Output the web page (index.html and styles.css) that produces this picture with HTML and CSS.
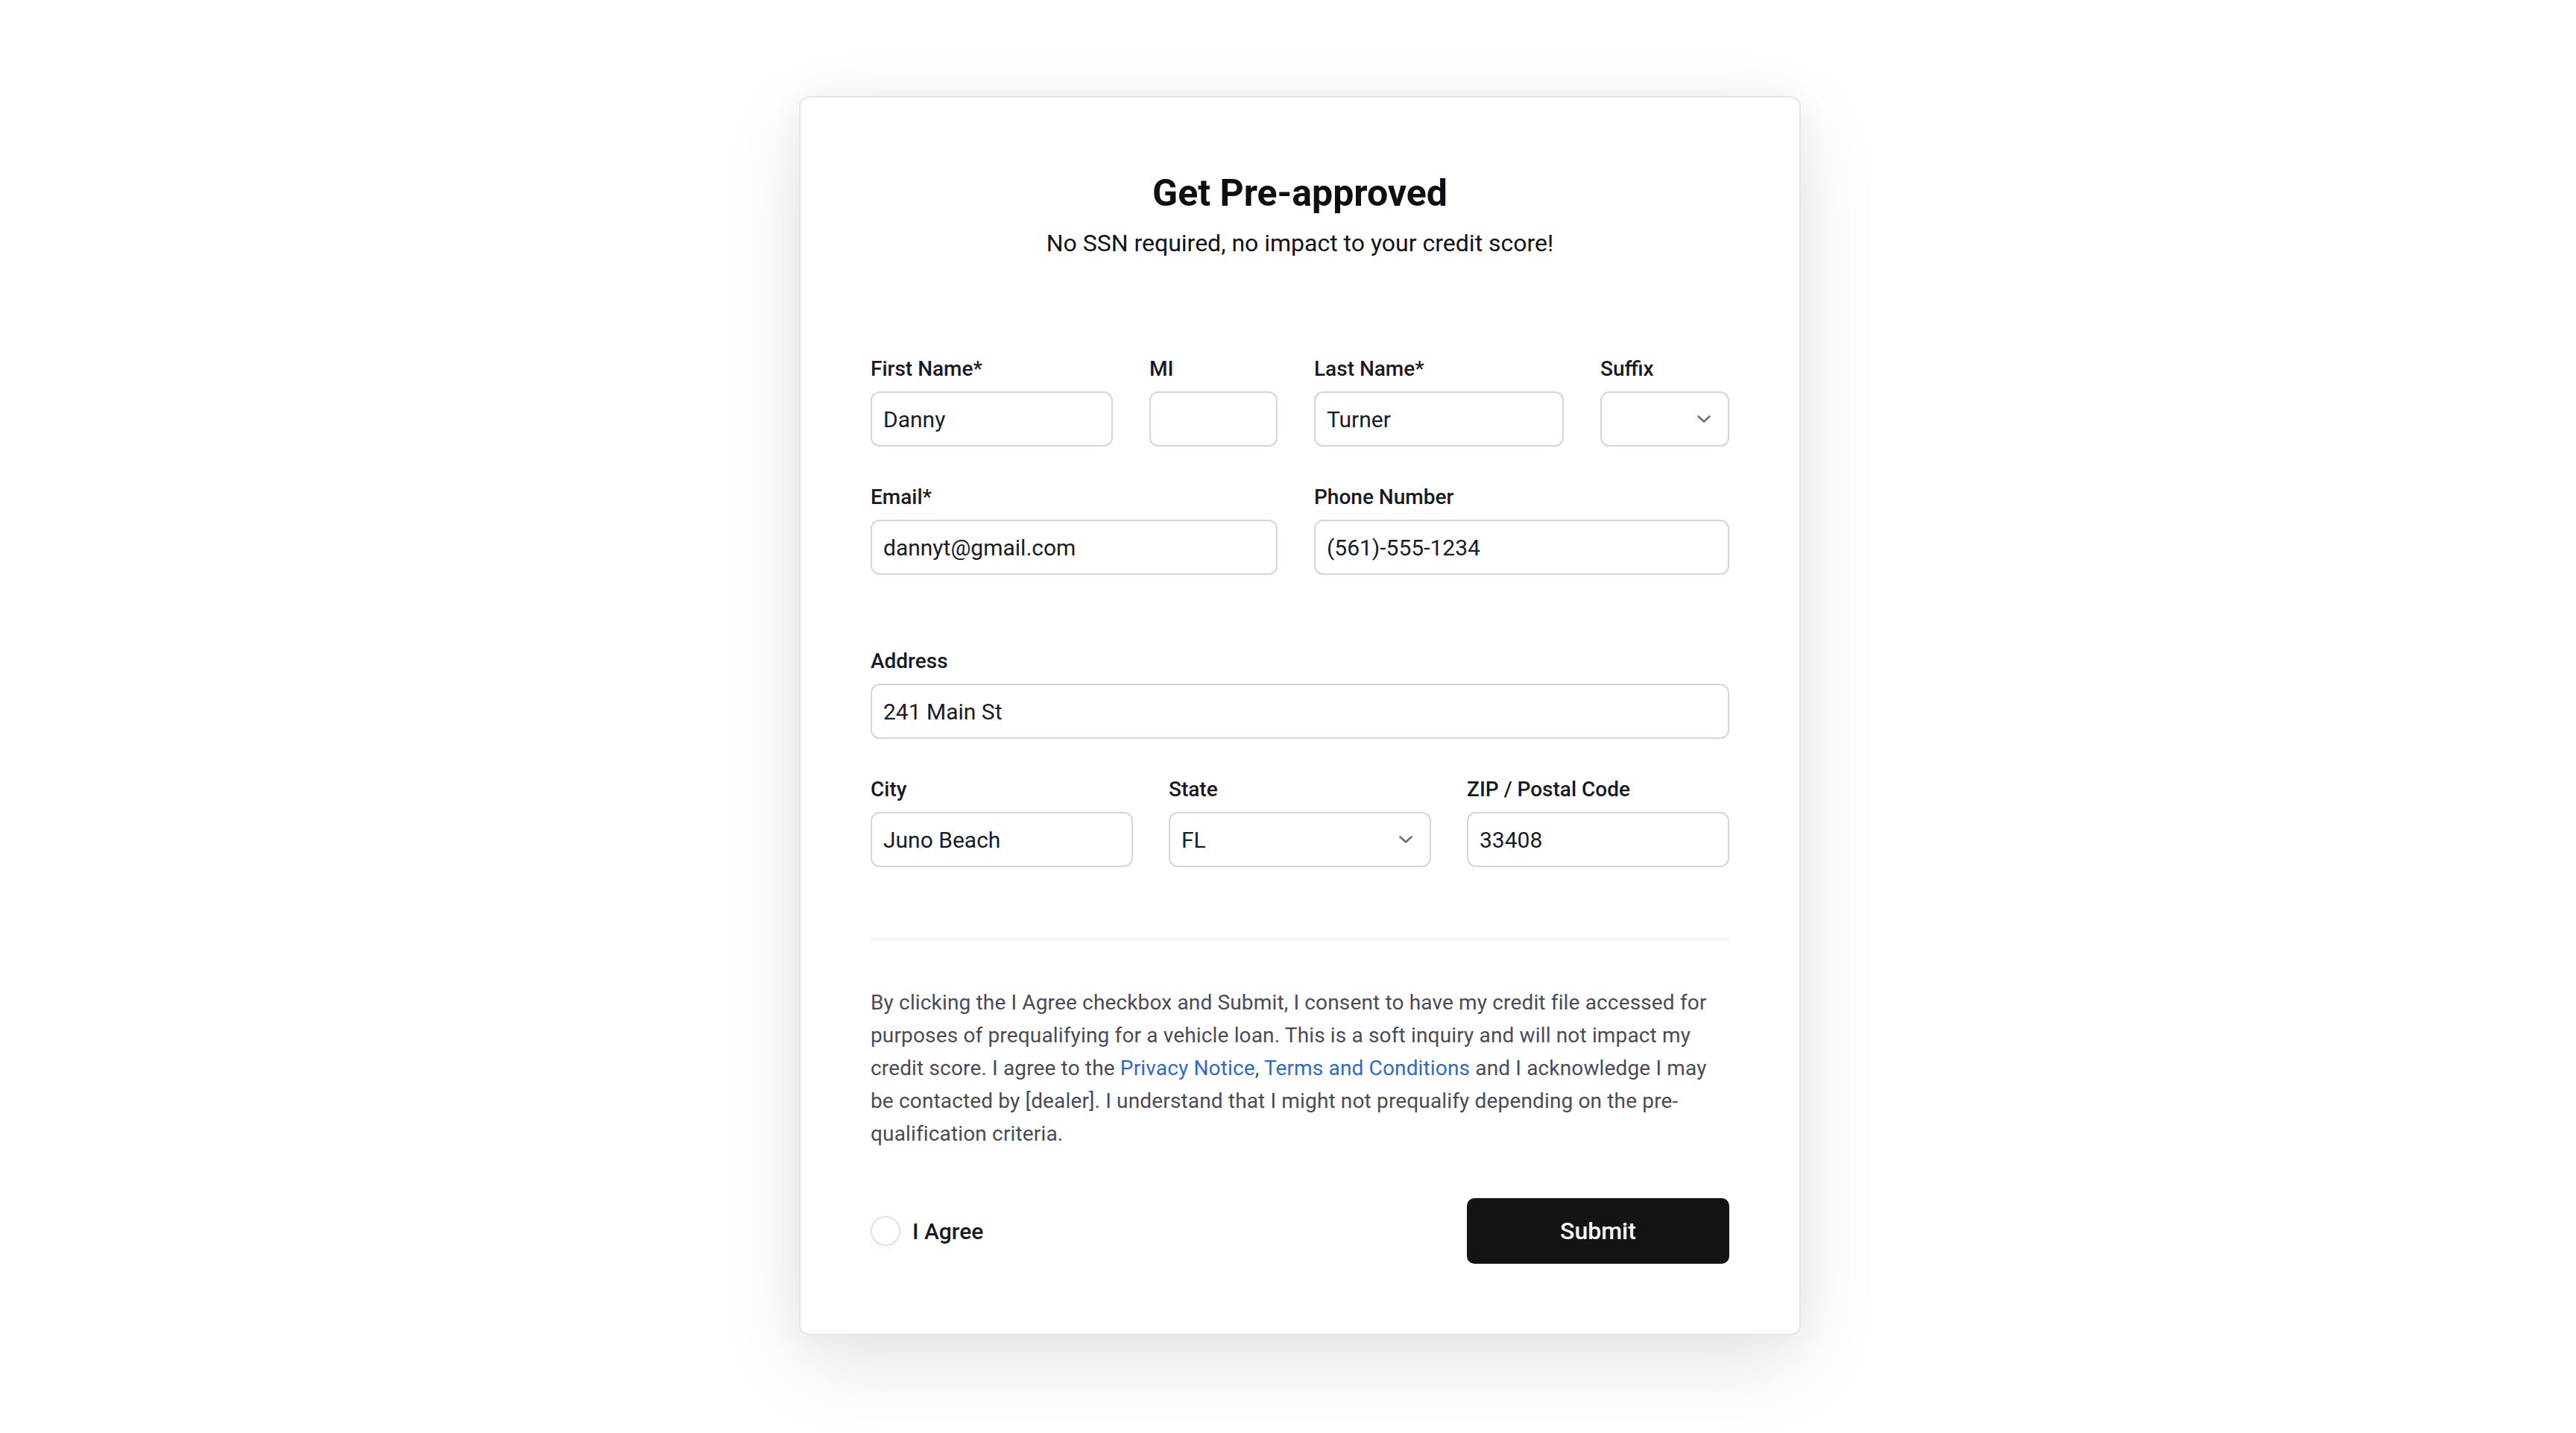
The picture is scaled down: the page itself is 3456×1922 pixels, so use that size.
FILE: index.html
```html
<!DOCTYPE html>
<html lang="en">
<head>
<meta charset="utf-8">
<title>Get Pre-approved</title>
<link rel="stylesheet" href="styles.css">
</head>
<body>
<main class="page">
  <form class="card" onsubmit="return false">
    <header class="card-head">
      <h1 class="title">Get Pre-approved</h1>
      <p class="subtitle">No SSN required, no impact to your credit score!</p>
    </header>

    <div class="group group-name">
      <label class="field">
        <span class="label">First Name*</span>
        <input class="input" type="text" value="Danny">
      </label>
      <label class="field">
        <span class="label">MI</span>
        <input class="input" type="text" value="">
      </label>
      <label class="field">
        <span class="label">Last Name*</span>
        <input class="input" type="text" value="Turner">
      </label>
      <div class="field">
        <span class="label">Suffix</span>
        <div class="input select">
          <span class="select-value"></span>
          <svg class="chevron" width="18" height="10" viewBox="0 0 18 10" aria-hidden="true"><path d="M1.5 1.5 L9 8.5 L16.5 1.5" fill="none" stroke="#6b7280" stroke-width="2.6" stroke-linecap="round" stroke-linejoin="round"/></svg>
        </div>
      </div>
      <label class="field span2">
        <span class="label">Email*</span>
        <input class="input" type="email" value="dannyt@gmail.com">
      </label>
      <label class="field span2">
        <span class="label">Phone Number</span>
        <input class="input" type="tel" value="(561)-555-1234">
      </label>
    </div>

    <div class="group group-address">
      <label class="field span-all">
        <span class="label">Address</span>
        <input class="input" type="text" value="241 Main St">
      </label>
      <label class="field">
        <span class="label">City</span>
        <input class="input" type="text" value="Juno Beach">
      </label>
      <div class="field">
        <span class="label">State</span>
        <div class="input select">
          <span class="select-value">FL</span>
          <svg class="chevron" width="18" height="10" viewBox="0 0 18 10" aria-hidden="true"><path d="M1.5 1.5 L9 8.5 L16.5 1.5" fill="none" stroke="#6b7280" stroke-width="2.6" stroke-linecap="round" stroke-linejoin="round"/></svg>
        </div>
      </div>
      <label class="field">
        <span class="label">ZIP / Postal Code</span>
        <input class="input" type="text" value="33408">
      </label>
    </div>

    <hr class="divider">

    <p class="legal">By clicking the I Agree checkbox and Submit, I consent to have my credit file accessed for purposes of prequalifying for a vehicle loan. This is a soft inquiry and will not impact my credit score. I agree to the <a href="#">Privacy Notice</a>, <a href="#">Terms and Conditions</a> and I acknowledge I may be contacted by [dealer]. I understand that I might not prequalify depending on the pre-qualification criteria.</p>

    <div class="agree-row">
      <label class="agree">
        <input class="radio" type="radio" name="agree">
        <span>I Agree</span>
      </label>
      <button class="submit" type="submit">Submit</button>
    </div>
  </form>
</main>
</body>
</html>
```

FILE: styles.css
```css
html, body {
  margin: 0;
  padding: 0;
  background: #ffffff;
}

body {
  font-family: Roboto, "Liberation Sans", Arial, sans-serif;
  color: #16161f;
}

.page {
  display: flex;
  justify-content: center;
  align-items: flex-start;
  padding: 129px 0 120px 32px;
  box-sizing: border-box;
}

.card {
  width: 1344px;
  box-sizing: border-box;
  background: #ffffff;
  border: 2px solid #e4e4e9;
  border-radius: 14px;
  padding: 96px 94px 94px;
  box-shadow: 0 36px 110px rgba(20, 20, 30, 0.11), 0 0 50px rgba(20, 20, 30, 0.04);
}

.card-head {
  text-align: center;
}

.title {
  margin: 0;
  font-size: 50px;
  line-height: 64px;
  font-weight: 700;
  color: #0e0e14;
}

.subtitle {
  margin: 11px 0 0;
  font-size: 32px;
  line-height: 48px;
  font-weight: 400;
  color: #121218;
}

.group {
  display: grid;
  row-gap: 48px;
}

.group-name {
  margin-top: 125px;
  grid-template-columns: 325px 172px 335px 173px;
  column-gap: 49px;
}

.group-address {
  margin-top: 96px;
  grid-template-columns: repeat(3, 1fr);
  column-gap: 48px;
}

.span2 {
  grid-column: span 2;
}

.span-all {
  grid-column: 1 / -1;
}

.field {
  display: flex;
  flex-direction: column;
  gap: 10px;
  min-width: 0;
}

.label {
  font-size: 28px;
  line-height: 40px;
  font-weight: 500;
  color: #191926;
}

.input {
  box-sizing: border-box;
  width: 100%;
  height: 74px;
  margin: 0;
  padding: 0 15px;
  border: 2px solid #d3d6dc;
  border-radius: 12px;
  background: #ffffff;
  font-family: Roboto, "Liberation Sans", Arial, sans-serif;
  font-size: 30px;
  font-weight: 400;
  color: #1b1b28;
  outline: none;
}

.select {
  display: flex;
  align-items: center;
  justify-content: space-between;
  padding-right: 23px;
}

.chevron {
  flex: none;
  display: block;
}

.divider {
  margin: 96px 0 0;
  height: 2px;
  border: 0;
  background: #efeff2;
}

.legal {
  margin: 62px 0 0;
  font-size: 28px;
  line-height: 44px;
  letter-spacing: 0.15px;
  color: #4a4a58;
}

.legal a {
  color: #2a6bcc;
  text-decoration: none;
}

.agree-row {
  margin-top: 64px;
  display: grid;
  grid-template-columns: repeat(3, 1fr);
  column-gap: 48px;
  align-items: center;
}

.agree {
  display: flex;
  align-items: center;
  gap: 16px;
  font-size: 30px;
  font-weight: 500;
  color: #191926;
}

.radio {
  appearance: none;
  -webkit-appearance: none;
  width: 40px;
  height: 40px;
  margin: 0;
  border: 2px solid #e2e2e7;
  border-radius: 50%;
  background: #ffffff;
  box-shadow: 0 2px 10px rgba(0, 0, 0, 0.05);
}

.submit {
  grid-column: 3;
  height: 88px;
  border: 0;
  border-radius: 10px;
  background: #141414;
  color: #ffffff;
  font-family: Roboto, "Liberation Sans", Arial, sans-serif;
  font-size: 32px;
  font-weight: 500;
  cursor: pointer;
}
```
